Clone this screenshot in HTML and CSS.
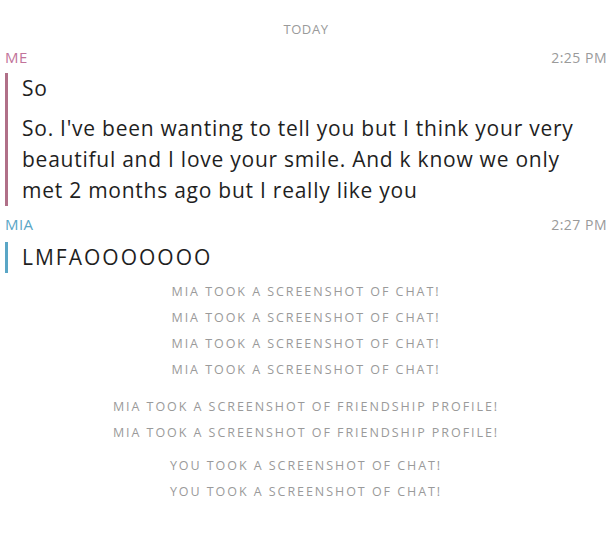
FILE: index.html
```html
<!DOCTYPE html>
<html lang="en">
<head>
    <meta charset="UTF-8">
    <meta name="viewport" content="width=device-width, initial-scale=1.0">
    <title>Chat</title>
    <link rel="stylesheet" href="styles.css">
</head>
<body>
    <div class="chat">
        <div class="day">TODAY</div>

        <div class="group me">
            <div class="meta">
                <span class="name">ME</span>
                <span class="time">2:25 PM</span>
            </div>
            <div class="bubble">
                <p>So</p>
                <p>So. I've been wanting to tell you but I think your very beautiful and I love your smile. And k know we only met 2 months ago but I really like you</p>
            </div>
        </div>

        <div class="group them">
            <div class="meta">
                <span class="name">MIA</span>
                <span class="time">2:27 PM</span>
            </div>
            <div class="bubble">
                <p>LMFAOOOOOOO</p>
            </div>
        </div>

        <div class="notices">
            <ul class="notice-set">
                <li>MIA TOOK A SCREENSHOT OF CHAT!</li>
                <li>MIA TOOK A SCREENSHOT OF CHAT!</li>
                <li>MIA TOOK A SCREENSHOT OF CHAT!</li>
                <li>MIA TOOK A SCREENSHOT OF CHAT!</li>
            </ul>
            <ul class="notice-set">
                <li>MIA TOOK A SCREENSHOT OF FRIENDSHIP PROFILE!</li>
                <li>MIA TOOK A SCREENSHOT OF FRIENDSHIP PROFILE!</li>
            </ul>
            <ul class="notice-set last">
                <li>YOU TOOK A SCREENSHOT OF CHAT!</li>
                <li>YOU TOOK A SCREENSHOT OF CHAT!</li>
            </ul>
        </div>
    </div>
</body>
</html>
```

FILE: styles.css
```css
:root {
    --me-color: #c2739a;
    --me-bar: #b07088;
    --them-color: #5aa6c6;
    --muted: #9a9a9a;
    --text: #1f1f1f;
}

* {
    margin: 0;
    padding: 0;
    box-sizing: border-box;
}

body {
    font-family: 'Open Sans', 'Noto Sans', sans-serif;
    background: #fff;
    color: var(--text);
}

.chat {
    padding: 21px 6px 0 5px;
}

.day {
    text-align: center;
    font-size: 13px;
    letter-spacing: 0.6px;
    color: var(--muted);
    line-height: 16px;
    margin-bottom: 11px;
}

.meta {
    display: flex;
    justify-content: space-between;
    align-items: baseline;
    line-height: 18px;
}

.name {
    font-size: 15px;
    letter-spacing: 0.4px;
}

.time {
    font-size: 14px;
    letter-spacing: 0.5px;
    color: var(--muted);
}

.me .name {
    color: var(--me-color);
}

.them .name {
    color: var(--them-color);
}

.bubble {
    margin-top: 6px;
    border-left: 3px solid var(--me-bar);
    padding: 0 20px 0 14px;
    font-size: 21px;
    letter-spacing: 0.75px;
    line-height: 31px;
}

.them .bubble {
    margin-top: 8px;
    border-left-color: var(--them-color);
    letter-spacing: 2px;
}

.bubble p + p {
    margin-top: 9px;
}

.group {
    margin-bottom: 9px;
}

.group.them {
    margin-bottom: 6px;
}

.notice-set {
    list-style: none;
    text-align: center;
    font-size: 12.5px;
    letter-spacing: 1.95px;
    color: var(--muted);
}

.notice-set li {
    line-height: 26px;
}

.notice-set + .notice-set {
    margin-top: 11px;
}

.notice-set.last {
    margin-top: 7px;
}
```
